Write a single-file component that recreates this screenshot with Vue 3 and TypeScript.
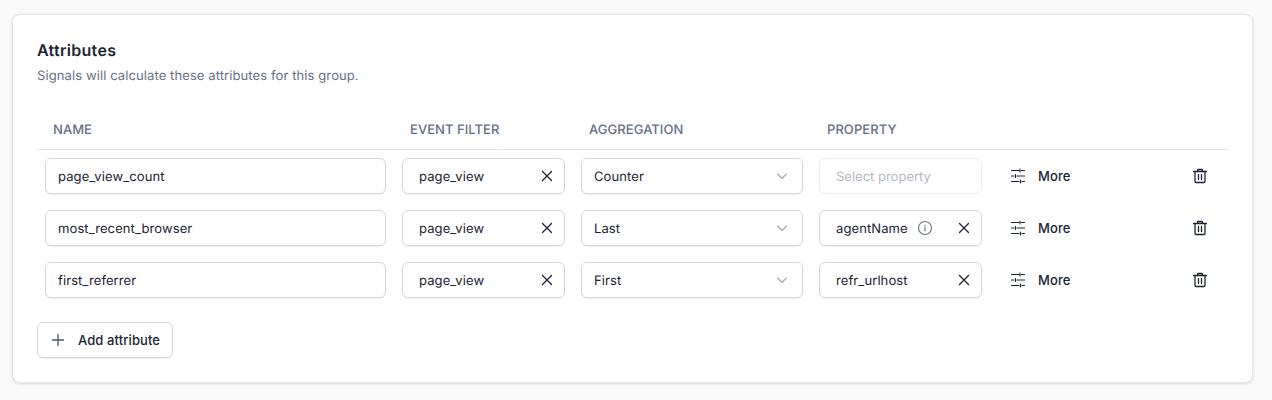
<script setup lang="ts">
interface Row {
  name: string;
  agg: string;
  prop: string;
  info?: boolean;
}
const headers: string[] = ['Name', 'Event filter', 'Aggregation', 'Property', ''];
const rows: Row[] = [
  { name: 'page_view_count', agg: 'Counter', prop: '' },
  { name: 'most_recent_browser', agg: 'Last', prop: 'agentName', info: true },
  { name: 'first_referrer', agg: 'First', prop: 'refr_urlhost' },
];
</script>

<template>
  <div class="page">
    <section class="card">
      <h2 class="title">Attributes</h2>
      <p class="desc">Signals will calculate these attributes for this group.</p>
      <div class="head grid">
        <div v-for="h in headers" :key="h" class="th">{{ h }}</div>
      </div>
      <div v-for="r in rows" :key="r.name" class="grid row">
        <div class="cell"><div class="field">{{ r.name }}</div></div>
        <div class="cell">
          <div class="field pick">
            <span>page_view</span>
            <svg class="x" width="16" height="16" viewBox="0 0 16 16"><path d="M3.500 3.500l9 9M12.500 3.500l-9 9" /></svg>
          </div>
        </div>
        <div class="cell">
          <div class="field sel">
            <span>{{ r.agg }}</span>
            <svg class="chev" width="16" height="16" viewBox="0 0 16 16"><path d="M3.500 6l4.500 4.500L12.500 6" /></svg>
          </div>
        </div>
        <div class="cell">
          <div v-if="r.prop" class="field pick">
            <span class="prop">{{ r.prop }}
              <svg v-if="r.info" class="info" width="16" height="16" viewBox="0 0 16 16"><circle cx="8" cy="8" r="6.500" /><path d="M8 7.400v3.600M8 5v.6" /></svg>
            </span>
            <svg class="x" width="16" height="16" viewBox="0 0 16 16"><path d="M3.500 3.500l9 9M12.500 3.500l-9 9" /></svg>
          </div>
          <div v-else class="field pick off">Select property</div>
        </div>
        <div class="cell acts">
          <button class="more" type="button">
            <svg class="sliders" width="16" height="16" viewBox="0 0 16 16"><path d="M1.500 2.500H9M11.500 2.500h3M10 1v3M1.500 8H4M7 8h7.500M5.500 6.500v3M1.500 13.500H9M12 13.500h2.500M10.500 12v3" /></svg>
            More
          </button>
          <svg class="trash" width="16" height="16" viewBox="0 0 16 16"><path d="M1.500 3.500h13M5.500 3.500V2.200c0-.4.300-.7.700-.7h3.600c.4 0 .7.300.7.700v1.300M3 3.500v9.800c0 .7.500 1.200 1.200 1.200h7.600c.7 0 1.200-.5 1.200-1.200V3.500M6.500 6.500v5M9.500 6.500v5" /></svg>
        </div>
      </div>
      <button class="add" type="button">
        <svg class="plus" width="16" height="16" viewBox="0 0 16 16"><path d="M8 2.500v11M2.500 8h11" /></svg>
        Add attribute
      </button>
    </section>
  </div>
</template>

<style scoped>
.page {
  box-sizing: border-box;
  height: 400px;
  padding: 14px 19px 0 12px;
  background: #fafafa;
  font-family: Inter, "Liberation Sans", sans-serif;
  color: #1b2433;
  text-rendering: geometricPrecision;
  letter-spacing: 0.1px;
}
.card {
  box-sizing: border-box;
  width: 1241px;
  height: 369px;
  padding: 23px 24px 24px;
  background: #fff;
  border: 1px solid #e5e7eb;
  border-radius: 8px;
  box-shadow: 0 1px 3px rgba(16, 24, 40, 0.14);
}
.title {
  margin: 0;
  font-size: 16px;
  line-height: 24px;
  font-weight: 600;
  letter-spacing: 0.3px;
}
.desc {
  margin: 4px 0 0;
  font-size: 13px;
  line-height: 20px;
  color: #667085;
}
.grid {
  display: grid;
  grid-template-columns: 357px 179px 238px 179px 1fr;
  width: 1191px;
}
.head {
  margin-top: 21px;
  height: 43px;
  padding-top: 4px;
  align-items: center;
  border-bottom: 1px solid #e5e7eb;
  box-sizing: border-box;
}
.th {
  padding-left: 16px;
  font-size: 13px;
  font-weight: 500;
  text-transform: uppercase;
  letter-spacing: 0.05px;
  color: #667085;
}
.row {
  height: 52px;
  align-items: center;
}
.cell {
  padding: 0 8px;
}
.field {
  box-sizing: border-box;
  height: 36px;
  padding: 1px 12px 0;
  display: flex;
  align-items: center;
  justify-content: space-between;
  border: 1px solid #d5d7dc;
  border-radius: 6px;
  box-shadow: 0 1px 1px rgba(16, 24, 40, 0.06);
  font-size: 13px;
  background: #fff;
}
.pick {
  padding: 1px 9px 0 16px;
}
.sel {
  padding: 1px 12px 0;
}
.off {
  border-color: #eaecf0;
  color: #b4b9c4;
  box-shadow: none;
  letter-spacing: 0;
}
.prop {
  display: inline-flex;
  align-items: center;
  gap: 9px;
}
svg {
  fill: none;
  flex: none;
  stroke-linecap: round;
}
.x {
  stroke: #1b2433;
  stroke-width: 1.3;
  margin-top: -1px;
}
.chev {
  stroke: #98a2b3;
  stroke-width: 1.1;
  margin-top: -1px;
}
.info {
  stroke: #667085;
  stroke-width: 1.1;
  margin-top: -1px;
}
.acts {
  display: flex;
  align-items: center;
  justify-content: space-between;
  padding: 0 20px 0 20px;
}
.more {
  display: inline-flex;
  align-items: center;
  gap: 12px;
  padding: 0;
  border: 0;
  background: none;
  font: 500 13px Inter, sans-serif;
  letter-spacing: inherit;
  color: #1b2433;
}
.sliders {
  stroke: #1b2433;
  stroke-width: 1.1;
}
.trash {
  stroke: #1b2433;
  stroke-width: 1.3;
}
.add {
  display: inline-flex;
  align-items: center;
  gap: 12px;
  box-sizing: border-box;
  margin-top: 16px;
  height: 36px;
  width: 136px;
  padding: 0 12px;
  white-space: nowrap;
  border: 1px solid #d5d7dc;
  border-radius: 6px;
  background: #fff;
  box-shadow: 0 1px 1px rgba(16, 24, 40, 0.06);
  font: 500 13px Inter, sans-serif;
  letter-spacing: inherit;
  color: #1b2433;
}
.plus {
  stroke: #4b5565;
  stroke-width: 1.3;
}
</style>
